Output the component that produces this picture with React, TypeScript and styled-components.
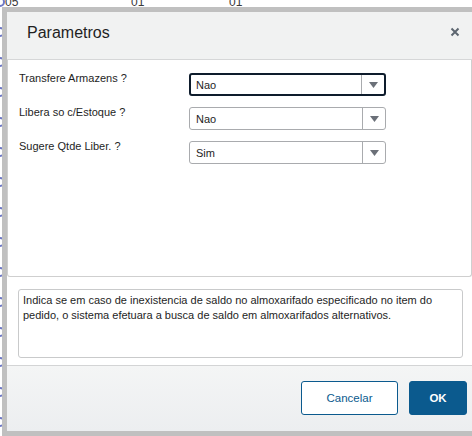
import React from "react";
import styled, { createGlobalStyle } from "styled-components";

const GlobalStyle = createGlobalStyle`
  html, body {
    margin: 0;
    padding: 0;
    background: #ffffff;
  }
  body {
    font-family: "Liberation Sans", Arial, sans-serif;
    overflow: hidden;
  }
`;

const Screen = styled.div`
  position: relative;
  width: 472px;
  height: 436px;
  overflow: hidden;
  background: #ffffff;
`;

/* the grid that sits behind the dialog */
const BackGrid = styled.div`
  display: flex;
  flex-direction: column;
  margin-top: -13px;
`;

const BackRow = styled.div`
  display: flex;
  align-items: center;
  height: 30px;
  font-size: 12px;
  color: #3a3a3a;
`;

const BackMark = styled.span`
  width: 6px;
  height: 6px;
  margin-left: -5px;
  border: 2px solid #6f79c6;
  border-radius: 50%;
`;

const BackCell = styled.span<{ $w: number }>`
  width: ${(p) => p.$w}px;
`;

const Modal = styled.div`
  position: absolute;
  left: 2px;
  top: 7px;
  width: 472px;
  height: 419px;
  border: 5px solid #c0c0c0;
  border-right: none;
  background: #ffffff;
  display: flex;
  flex-direction: column;
`;

const Header = styled.div`
  display: flex;
  align-items: center;
  justify-content: space-between;
  height: 48px;
  padding: 0 19px 5px 20px;
  box-sizing: border-box;
  background: #f1f2f2;
  border-bottom: 1px solid #d6d7d8;
  flex: none;
`;

const Title = styled.h1`
  margin: 0;
  font-size: 16px;
  font-weight: 400;
  color: #1f1f1f;
`;

const CloseButton = styled.button`
  border: none;
  background: transparent;
  padding: 0;
  margin-top: -3px;
  width: 10px;
  height: 10px;
  display: flex;
  cursor: pointer;
`;

const FieldsPanel = styled.div`
  width: 465px;
  height: 217px;
  box-sizing: border-box;
  border: 1px solid #cfcfcf;
  border-top: none;
  border-radius: 0 0 3px 3px;
  padding: 13px 11px;
  display: grid;
  grid-template-columns: 170px 197px;
  grid-auto-rows: 23px;
  row-gap: 11px;
  flex: none;
`;

const Label = styled.label`
  font-size: 11px;
  line-height: 13px;
  color: #1e1e1e;
  margin-top: -1px;
`;

const Select = styled.div<{ $focused?: boolean }>`
  display: flex;
  align-items: stretch;
  height: 23px;
  box-sizing: border-box;
  border: ${(p) => (p.$focused ? "2px solid #0e1c2c" : "1px solid #a9abae")};
  border-radius: 3px;
  background: #ffffff;
`;

const SelectValue = styled.span<{ $focused?: boolean }>`
  flex: 1;
  display: flex;
  align-items: center;
  padding-left: ${(p) => (p.$focused ? 5 : 6)}px;
  padding-top: 1px;
  font-size: 11px;
  color: #1e1e1e;
`;

const SelectArrow = styled.span`
  width: 22px;
  border-left: 1px solid #a9abae;
  display: flex;
  align-items: center;
  justify-content: center;
`;

const HelpArea = styled.div`
  padding: 12px 16px 7px 11px;
  flex: none;
`;

const HelpBox = styled.div`
  height: 69px;
  box-sizing: border-box;
  border: 1px solid #c9cacb;
  border-radius: 3px;
  padding: 3px 4px;
  font-size: 11px;
  line-height: 15px;
  color: #1e1e1e;
`;

const Footer = styled.div`
  flex: 1;
  display: flex;
  justify-content: flex-end;
  align-items: flex-start;
  gap: 11px;
  padding: 15px 12px 0 0;
  border-top: 1px solid #d3d4d5;
  background: linear-gradient(to bottom, #f4f5f5, #eceef0);
`;

const Button = styled.button<{ $primary?: boolean }>`
  height: 34px;
  width: ${(p) => (p.$primary ? 58 : 97)}px;
  border-radius: 3px;
  border: 1px solid #0b5a8e;
  background: ${(p) => (p.$primary ? "#0b5a8e" : "#ffffff")};
  color: ${(p) => (p.$primary ? "#ffffff" : "#0b5a8e")};
  font-family: "Liberation Sans", Arial, sans-serif;
  font-size: 11.5px;
  font-weight: ${(p) => (p.$primary ? 700 : 400)};
  cursor: pointer;
`;

const Arrow = () => (
  <svg width="9" height="6" viewBox="0 0 9 6">
    <path d="M0 0 L9 0 L4.5 6 Z" fill="#6b7078" />
  </svg>
);

const fields = [
  { label: "Transfere Armazens ?", value: "Nao", focused: true },
  { label: "Libera so c/Estoque ?", value: "Nao" },
  { label: "Sugere Qtde Liber. ?", value: "Sim" },
];

const App = () => {
  return (
    <Screen>
      <GlobalStyle />
      <BackGrid>
        {Array.from({ length: 16 }).map((_, i) => (
          <BackRow key={i}>
            <BackMark />
            <BackCell $w={126}>{i === 0 ? "05" : ""}</BackCell>
            <BackCell $w={98}>{i === 0 ? "01" : ""}</BackCell>
            <BackCell $w={60}>{i === 0 ? "01" : ""}</BackCell>
          </BackRow>
        ))}
      </BackGrid>

      <Modal>
        <Header>
          <Title>Parametros</Title>
          <CloseButton aria-label="Fechar">
            <svg width="10" height="10" viewBox="0 0 10 10">
              <path
                d="M1.5 1.5 L8.5 8.5 M8.5 1.5 L1.5 8.5"
                stroke="#5d6670"
                strokeWidth="2"
              />
            </svg>
          </CloseButton>
        </Header>

        <FieldsPanel>
          {fields.map((f) => (
            <React.Fragment key={f.label}>
              <Label>{f.label}</Label>
              <Select $focused={f.focused}>
                <SelectValue $focused={f.focused}>{f.value}</SelectValue>
                <SelectArrow>
                  <Arrow />
                </SelectArrow>
              </Select>
            </React.Fragment>
          ))}
        </FieldsPanel>

        <HelpArea>
          <HelpBox>
            Indica se em caso de inexistencia de saldo no almoxarifado especificado no item do
            pedido, o sistema efetuara a busca de saldo em almoxarifados alternativos.
          </HelpBox>
        </HelpArea>

        <Footer>
          <Button>Cancelar</Button>
          <Button $primary>OK</Button>
        </Footer>
      </Modal>
    </Screen>
  );
};

export default App;
